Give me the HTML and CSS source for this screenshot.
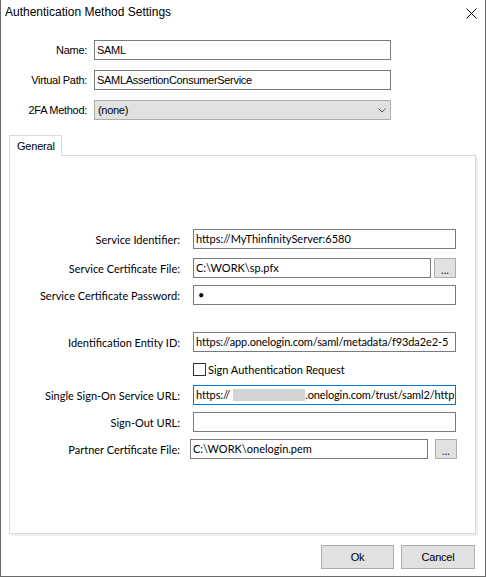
FILE: index.html
```html
<!DOCTYPE html>
<html>
<head>
<meta charset="utf-8">
<link rel="stylesheet" href="styles.css">
</head>
<body>
<div class="window">
  <div class="titlebar">
    <span class="title">Authentication Method Settings</span>
    <svg class="close" width="11" height="11" viewBox="0 0 11 11"><path d="M0.5 0.5 L10.5 10.5 M10.5 0.5 L0.5 10.5" stroke="#000" stroke-width="1" fill="none"/></svg>
  </div>

  <div class="top-form">
    <label class="top-label">Name:</label>
    <div class="field top-field">SAML</div>
    <label class="top-label">Virtual Path:</label>
    <div class="field top-field">SAMLAssertionConsumerService</div>
    <label class="top-label">2FA Method:</label>
    <div class="combo">
      <span>(none)</span>
      <svg class="chevron" width="8" height="5" viewBox="0 0 8 5"><path d="M0.5 0.5 L4 4 L7.5 0.5" stroke="#555" stroke-width="1" fill="none"/></svg>
    </div>
  </div>

  <div class="tabs">
    <div class="tab">General</div>
  </div>
  <div class="panel">
    <div class="row">
      <label class="lbl">Service Identifier:</label>
      <div class="field wide">https://MyThinfinityServer:6580</div>
    </div>
    <div class="row gap9">
      <label class="lbl">Service Certificate File:</label>
      <div class="field file">C:\WORK\sp.pfx</div>
      <div class="browse">...</div>
    </div>
    <div class="row gap7">
      <label class="lbl">Service Certificate Password:</label>
      <div class="field wide"><span class="bullet">•</span></div>
    </div>
    <div class="row gap27">
      <label class="lbl">Identification Entity ID:</label>
      <div class="field wide tight">https://app.onelogin.com/saml/metadata/f93da2e2-5</div>
    </div>
    <div class="check-row">
      <span class="checkbox"></span>
      <span class="check-text">Sign Authentication Request</span>
    </div>
    <div class="row gap9">
      <label class="lbl">Single Sign-On Service URL:</label>
      <div class="field wide focused tight">https://<span class="redact"></span>.onelogin.com/trust/saml2/http</div>
    </div>
    <div class="row gap7">
      <label class="lbl">Sign-Out URL:</label>
      <div class="field wide"></div>
    </div>
    <div class="row gap7">
      <label class="lbl">Partner Certificate File:</label>
      <div class="field partner">C:\WORK\onelogin.pem</div>
      <div class="browse partner-browse">...</div>
    </div>
  </div>

  <div class="buttons">
    <div class="btn ok">Ok</div>
    <div class="btn cancel">Cancel</div>
  </div>
</div>
</body>
</html>
```
FILE: styles.css
```css
* { box-sizing: border-box; }
body {
  margin: 0;
  background: #ffffff;
  font-family: "Lato", "Liberation Sans", sans-serif;
  font-size: 11px;
  color: #000;
}
.window {
  width: 486px;
  height: 577px;
  border-left: 1px solid #6b6b6b;
  border-right: 1px solid #6b6b6b;
  border-bottom: 1px solid #6b6b6b;
  background: #fff;
}
.titlebar {
  height: 25px;
  display: flex;
  justify-content: space-between;
  align-items: flex-start;
  padding: 0 8px 0 4px;
}
.title {
  font-family: "Liberation Sans", sans-serif;
  font-size: 12px;
  line-height: 25px;
  color: #000;
}
.close { margin-top: 8px; display: block; }

.top-form {
  display: grid;
  grid-template-columns: 86px 297px;
  column-gap: 7px;
  row-gap: 10px;
  padding-top: 15px;
}
.top-label {
  font-family: "Liberation Sans", sans-serif;
  font-size: 11px;
  letter-spacing: -0.3px;
  text-align: right;
  line-height: 20px;
  height: 20px;
}
.field {
  height: 20px;
  border: 1px solid #7a7a7a;
  background: #fff;
  padding-left: 2px;
  line-height: 18px;
  white-space: nowrap;
  overflow: hidden;
  font-family: "Lato", sans-serif;
  font-size: 11px;
}
.tight { letter-spacing: -0.12px; }
.top-field {
  font-family: "Liberation Sans", sans-serif;
  letter-spacing: -0.3px;
}
.combo {
  height: 20px;
  border: 1px solid #adadad;
  background: #e1e1e1;
  display: flex;
  align-items: center;
  justify-content: space-between;
  padding: 0 4px 0 3px;
  font-family: "Liberation Sans", sans-serif;
  font-size: 11px;
  letter-spacing: -0.3px;
}
.chevron { display: block; }

.tabs {
  margin: 15px 0 0 8px;
  display: flex;
}
.tab {
  position: relative;
  z-index: 1;
  width: 53px;
  height: 21px;
  margin-bottom: -1px;
  border: 1px solid #d9d9d9;
  border-bottom: none;
  background: #fff;
  padding-left: 7px;
  line-height: 20px;
  font-family: "Liberation Sans", sans-serif;
  font-size: 11px;
  letter-spacing: -0.2px;
}
.panel {
  margin-left: 8px;
  width: 467px;
  height: 379px;
  border: 1px solid #d9d9d9;
  box-shadow: 2px 2px 0 #f0f0f0;
  padding-top: 73px;
}
.row {
  display: flex;
  align-items: center;
  height: 20px;
}
.gap7 { margin-top: 7px; }
.gap9 { margin-top: 9px; }
.gap27 { margin-top: 27px; }
.lbl {
  width: 170px;
  text-align: right;
  margin-right: 13px;
  white-space: nowrap;
}
.wide { width: 263px; }
.file { width: 238px; }
.browse {
  width: 22px;
  height: 20px;
  margin-left: 3px;
  border: 1px solid #adadad;
  background: #e1e1e1;
  text-align: center;
  line-height: 22px;
  font-size: 11px;
  color: #1a1a5a;
}
.partner { width: 238px; margin-left: -3px; }
.partner-browse { margin-left: 7px; }
.bullet { font-size: 11px; padding-left: 2px; }
.focused { border-color: #0078d7; }
.redact {
  display: inline-block;
  width: 72px;
  height: 12px;
  margin-left: 3px;
  background: #d4d4d4;
  vertical-align: -2px;
}
.check-row {
  display: flex;
  align-items: center;
  margin-top: 11px;
  margin-left: 183px;
  height: 13px;
}
.checkbox {
  width: 13px;
  height: 13px;
  border: 1px solid #333;
  background: #fff;
}
.check-text { margin-left: 2px; }
.check-row + .row { margin-top: 9px; }

.buttons {
  display: flex;
  justify-content: flex-end;
  gap: 7px;
  margin-top: 11px;
  padding-right: 10px;
}
.btn {
  height: 24px;
  border: 1px solid #adadad;
  background: #e1e1e1;
  text-align: center;
  line-height: 22px;
  font-family: "Liberation Sans", sans-serif;
  font-size: 11px;
  letter-spacing: -0.2px;
}
.ok { width: 73px; }
.cancel { width: 74px; }
```
